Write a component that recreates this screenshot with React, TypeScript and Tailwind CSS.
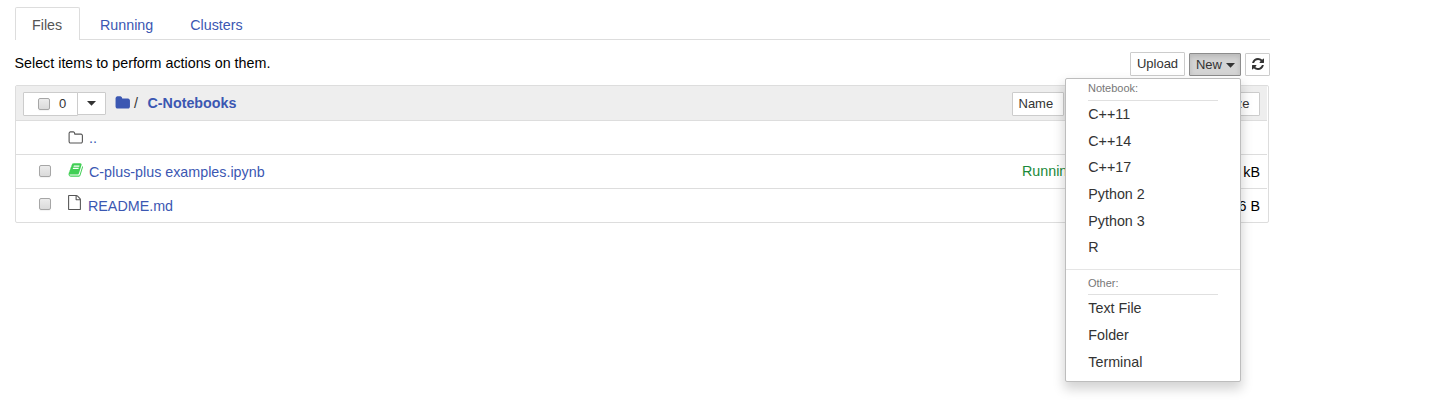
import type { ReactNode } from 'react';

const paths = {
  refresh:
    'M1639 1056q0 5-1 7-64 268-268 434.5t-478 166.5q-146 0-282.5-55t-243.5-157l-129 129q-19 19-45 19t-45-19-19-45v-448q0-26 19-45t45-19h448q26 0 45 19t19 45-19 45l-137 137q71 66 161 102t187 36q134 0 250-65t186-179q11-17 53-117 8-23 30-23h192q13 0 22.5 9.5t9.5 22.5zm25-800v448q0 26-19 45t-45 19h-448q-26 0-45-19t-19-45 19-45l138-138q-148-137-349-137-134 0-250 65t-186 179q-11 17-53 117-8 23-30 23h-199q-13 0-22.5-9.5t-9.5-22.5v-7q65-268 270-434.5t480-166.5q146 0 284 55.5t245 156.5l130-129q19-19 45-19t45 19 19 45z',
  book: 'M1703 478q40 57 18 129l-275 906q-19 64-76.5 107.5t-122.5 43.5h-923q-77 0-148.5-53.5t-99.5-131.5q-24-67-2-127 0-4 3-27t4-37q1-8-3-21.5t-3-19.5q2-11 8-21t16.5-23.5 16.5-23.5q23-38 45-91.5t30-91.5q3-10 .5-30t-.5-28q3-11 17-28t17-23q21-36 42-92t25-90q1-9-2.5-32t.5-28q4-13 22-30.5t22-22.5q19-26 42.5-84.5t27.5-96.5q1-8-3-25.5t-2-26.5q2-8 9-18t18-23 17-21q8-12 16.5-30.5t15-35 16-36 19.5-32 26.5-23.5 36-11.5 47.5 5.5l-1 3q38-9 51-9h761q74 0 114 56t18 130l-274 906q-36 119-71.5 153.5t-128.5 34.5h-869q-27 0-38 15-11 16-1 43 24 70 144 70h923q29 0 56-15.5t35-41.5l300-987q7-22 5-57 38 15 59 43zm-1064 2q-4 13 2 22.5t20 9.5h608q13 0 25.5-9.5t16.5-22.5l21-64q4-13-2-22.5t-20-9.5h-608q-13 0-25.5 9.5t-16.5 22.5zm-83 256q-4 13 2 22.5t20 9.5h608q13 0 25.5-9.5t16.5-22.5l21-64q4-13-2-22.5t-20-9.5h-608q-13 0-25.5 9.5t-16.5 22.5z',
  folder:
    'M1728 608v704q0 92-66 158t-158 66h-1216q-92 0-158-66t-66-158v-960q0-92 66-158t158-66h320q92 0 158 66t66 158v32h672q92 0 158 66t66 158z',
  folderOpen:
    'M1600 1312v-704q0-40-28-68t-68-28h-704q-40 0-68-28t-28-68v-64q0-40-28-68t-68-28h-320q-40 0-68 28t-28 68v960q0 40 28 68t68 28h1216q40 0 68-28t28-68zm128-704v704q0 92-66 158t-158 66h-1216q-92 0-158-66t-66-158v-960q0-92 66-158t158-66h320q92 0 158 66t66 158v32h672q92 0 158 66t66 158z',
  file: 'M1596 380q28 28 48 76t20 88v1152q0 40-28 68t-68 28h-1344q-40 0-68-28t-28-68v-1600q0-40 28-68t68-28h896q40 0 88 20t76 48zm-444-244v376h376q-10-29-22-41l-313-313q-12-12-41-22zm384 1528v-1024h-416q-40 0-68-28t-28-68v-416h-768v1536h1280z',
};

function Icon({ name, className }: { name: keyof typeof paths; className: string }) {
  return (
    <svg viewBox="0 0 1792 1792" fill="currentColor" className={className} aria-hidden="true">
      <path d={paths[name]} />
    </svg>
  );
}

function Caret({ className = '' }: { className?: string }) {
  return (
    <svg viewBox="0 0 9 5" className={`h-[5px] w-[9px] shrink-0 ${className}`} fill="#333" aria-hidden="true">
      <path d="M0 0h9L4.5 4.7z" />
    </svg>
  );
}

function Checkbox() {
  return (
    <span
      role="checkbox"
      aria-checked="false"
      className="block size-[12px] shrink-0 rounded-[2px] border border-[#a6a6a6] bg-linear-to-b from-[#ececec] to-[#dadada] shadow-[0_1px_1px_#0000000d]"
    />
  );
}

function Row({ checkbox, icon, children, status, size }: {
  checkbox?: boolean;
  icon: ReactNode;
  children: ReactNode;
  status?: string;
  size?: string;
}) {
  return (
    <div className="mr-px flex h-[34px] items-center border-b border-[#ddd] pr-[7px] last:mr-0 last:border-b-0 last:pr-2">
      <div className={`w-[52px] pl-[23px] ${status ? 'pb-px' : 'pb-1'}`}>{checkbox && <Checkbox />}</div>
      {icon}
      {children}
      {status && <span className="ml-auto w-[185px] pb-px text-[#1a8a3a]">{status}</span>}
      <span className={`text-right text-black ${status ? 'w-[53px] pt-px' : 'ml-auto'}`}>{size}</span>
    </div>
  );
}

const notebooks = ['C++11', 'C++14', 'C++17', 'Python 2', 'Python 3', 'R'];
const others = ['Text File', 'Folder', 'Terminal'];

function MenuSection({ title, items }: { title: string; items: string[] }) {
  return (
    <div>
      <div className="mx-[22px] border-b border-[#e0e0e0] text-[11px] text-[#777]">
        <div className="leading-[19px] h-[21px] in-[.other]:h-5">{title}</div>
      </div>
      {items.map((item) => (
        <div key={item} className="h-[26.7px] px-[22px] pl-[22.3px] text-[14.3px] leading-[27px] text-[#333]">
          {item}
        </div>
      ))}
    </div>
  );
}

export default function App() {
  return (
    <div className="h-[408px] w-full overflow-hidden bg-white pl-[15px] pt-[7px] font-['Liberation_Sans',Arial,sans-serif] text-[14.3px] leading-5 text-black">
      <div className="w-[1255px]">
        <nav className="flex h-[33px] border-b border-[#ddd] text-[#3b57b2]">
          <div className="h-[33px] w-[65px] rounded-t-[2px] border border-b-0 border-[#ddd] bg-white pl-4 pt-[7px] text-[#555]">Files</div>
          <div className="ml-5 mt-2">Running</div>
          <div className="ml-[37px] mt-2">Clusters</div>
        </nav>
        <div className="flex h-[45px] pt-3">
          <div className="-ml-[0.5px] pt-px">Select items to perform actions on them.</div>
          <div className="ml-auto flex text-[13px] text-[#333]">
            <button className="h-6 w-[55px] rounded-[1px] border border-[#ccc] bg-white">Upload</button>
            <div className="relative ml-1 mt-px">
              <button className="flex h-[23px] w-[52px] items-center justify-center rounded-[1px] border border-[#8c8c8c] bg-[#d4d4d4] pl-px shadow-[inset_0_3px_5px_#00000020]">
                New
                <Caret className="ml-1 mt-px" />
              </button>
              <div className="absolute right-0 top-[25px] z-10 h-[304px] w-[176px] rounded-[2px] border border-[#bdbdbd] bg-white shadow-[0_6px_12px_1px_#0000002d]">
                <MenuSection title="Notebook:" items={notebooks} />
                <div className="other mt-[8px] border-t border-[#e5e5e5] pt-1">
                  <MenuSection title="Other:" items={others} />
                </div>
              </div>
            </div>
            <button aria-label="Refresh" className="ml-1 mt-px flex h-[23px] w-[25px] items-center justify-center rounded-[1px] border border-[#ccc] bg-white">
              <Icon name="refresh" className="-mt-px size-[14px]" />
            </button>
          </div>
        </div>
        <div className="h-[138px] w-[1254px] rounded-[2px] border border-[#ddd] text-[#3b57b2]">
          <div className="mr-px flex h-[35px] border-b border-[#ddd] bg-[#eee] pl-[7px] pr-[7px] pt-[6px]">
            <div className="flex h-6 w-[55px] items-center rounded-l-[1px] border border-[#ccc] bg-white pb-px pl-[14px] text-[13px] text-[#333]">
              <Checkbox />
              <span className="ml-[9px]">0</span>
            </div>
            <div className="-ml-px flex h-[23px] w-[29px] items-center justify-center rounded-r-[1px] border border-[#ccc] bg-white">
              <Caret />
            </div>
            <Icon name="folder" className="ml-[8.5px] mt-[3px] h-4 w-[15.5px]" />
            <span className="ml-1 mt-px text-[#333]">/</span>
            <span className="ml-[9.5px] mt-px font-bold">C-Notebooks</span>
            <div className="ml-auto flex text-[13px] leading-[22px] text-[#333]">
              <div className="h-6 w-[52px] rounded-[1px] border border-[#ccc] bg-white pl-[5.5px]">Name</div>
              <div className="ml-[151px] h-6 w-[45px] rounded-[1px] border border-[#ccc] bg-white pr-[9.5px] text-right">Size</div>
            </div>
          </div>
          <Row icon={<Icon name="folderOpen" className="-ml-[0.5px] h-4 w-[15.5px] text-[#555]" />}>
            <span className="ml-[6px] mt-px">..</span>
          </Row>
          <Row checkbox icon={<Icon name="book" className="-ml-[0.5px] -mt-[3px] h-4 w-[15.5px] text-[#41cf55]" />} status="Running" size="20.1 kB">
            <span className="ml-[6px] mt-px">C-plus-plus examples.ipynb</span>
          </Row>
          <Row checkbox icon={<Icon name="file" className="-ml-px -mt-2 size-[15px] text-[#555]" />} size="886 B">
            <span className="ml-[6px]">README.md</span>
          </Row>
        </div>
      </div>
    </div>
  );
}
